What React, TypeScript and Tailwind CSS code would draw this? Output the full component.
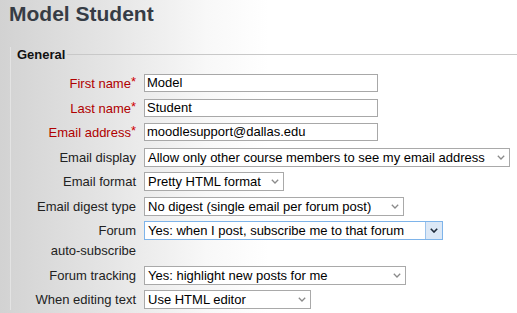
import React from "react";

const font = { fontFamily: '"Liberation Sans", Arial, sans-serif' };

function Chevron({ dark }: { dark?: boolean }) {
  return (
    <svg width="8" height="5" viewBox="0 0 8 5" className="block">
      <path
        d="M0.8 0.8 L4 4 L7.2 0.8"
        fill="none"
        stroke={dark ? "#1e2a3a" : "#8a8a8a"}
        strokeWidth={dark ? 1.6 : 1.3}
      />
    </svg>
  );
}

function Select({ text, w, focused }: { text: string; w: string; focused?: boolean }) {
  if (focused) {
    return (
      <div className={`flex h-[19px] items-stretch border border-[#7eb4ea] bg-white ${w}`}>
        <div className="flex-1 truncate pl-[3px] leading-[17px] text-black">{text}</div>
        <div className="flex w-[17px] items-center justify-center border-l border-[#9cc3ec] bg-[#dce8f6]">
          <Chevron dark />
        </div>
      </div>
    );
  }
  return (
    <div className={`flex h-[19px] items-stretch border border-[#a9a9a9] bg-white ${w}`}>
      <div className="flex-1 truncate pl-[3px] leading-[17px] text-black">{text}</div>
      <div className="flex w-[16px] items-center justify-center">
        <Chevron />
      </div>
    </div>
  );
}

function TextInput({ value }: { value: string }) {
  return (
    <div className="h-[18px] w-[234px] border border-[#a8a8a8] bg-white pl-[2px] leading-[16px] text-black">
      {value}
    </div>
  );
}

function Row({
  label,
  required,
  children,
}: {
  label: React.ReactNode;
  required?: boolean;
  children: React.ReactNode;
}) {
  return (
    <div className="mb-[4.5px] flex items-start">
      <div
        className={`w-[125px] shrink-0 text-right leading-[20px] ${
          required ? "text-[#b00000]" : "text-[#222]"
        }`}
      >
        {label}
        {required && <span className="relative -top-[2px] text-[#d00000]">*</span>}
      </div>
      <div className="ml-[8px]">{children}</div>
    </div>
  );
}

export default function App() {
  return (
    <div
      className="h-[313px] w-[517px] overflow-hidden bg-[linear-gradient(to_right,#d2d2d2_0%,#e6e6e6_22%,#f8f8f8_40%,#ffffff_52%)] text-[13px]"
      style={font}
    >
      <h1 className="pl-[9px] pt-[2px] text-[21px] font-bold leading-[24px] text-[#363c45]">
        Model Student
      </h1>
      <div className="ml-[10px] mt-[28px] border-l border-[#e3e3e3]">
        <div className="-mt-[7px] flex h-[15px] items-center">
          <span className="h-px w-[4px] bg-[#d6d6d6]" />
          <span className="px-[2px] font-bold leading-[15px] text-[#111]">General</span>
          <span className="h-px flex-1 bg-[#c8c8c8]" />
        </div>
        <div className="pt-[12px]">
          <Row label="First name" required>
            <TextInput value="Model" />
          </Row>
          <Row label="Last name" required>
            <TextInput value="Student" />
          </Row>
          <Row label="Email address" required>
            <TextInput value="moodlesupport@dallas.edu" />
          </Row>
          <Row label="Email display">
            <Select w="w-[366px]" text="Allow only other course members to see my email address" />
          </Row>
          <Row label="Email format">
            <Select w="w-[140px]" text="Pretty HTML format" />
          </Row>
          <Row label="Email digest type">
            <Select w="w-[260px]" text="No digest (single email per forum post)" />
          </Row>
          <Row
            label={
              <>
                Forum
                <br />
                auto-subscribe
              </>
            }
          >
            <Select w="w-[299px]" text="Yes: when I post, subscribe me to that forum" focused />
          </Row>
          <Row label="Forum tracking">
            <Select w="w-[262px]" text="Yes: highlight new posts for me" />
          </Row>
          <Row label="When editing text">
            <Select w="w-[167px]" text="Use HTML editor" />
          </Row>
        </div>
      </div>
    </div>
  );
}
